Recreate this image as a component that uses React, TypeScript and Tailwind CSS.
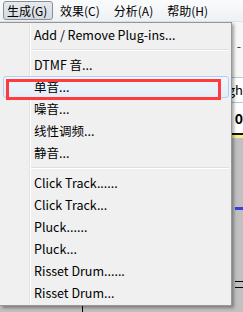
import React from 'react';

type Entry = { label: string } | { sep: true };

const entries: Entry[] = [
  { label: 'Add / Remove Plug-ins...' },
  { sep: true },
  { label: 'DTMF 音...' },
  { label: '单音...' },
  { label: '噪音...' },
  { label: '线性调频...' },
  { label: '静音...' },
  { sep: true },
  { label: 'Click Track......' },
  { label: 'Click Track...' },
  { label: 'Pluck......' },
  { label: 'Pluck...' },
  { label: 'Risset Drum......' },
  { label: 'Risset Drum...' },
];

const menus = ['生成(G)', '效果(C)', '分析(A)', '帮助(H)'];

const MenuRow: React.FC<{ label: string; active?: boolean }> = ({ label, active }) => (
  <div className="relative h-[22px] flex items-center pl-[34px]">
    {active && (
      <div className="absolute left-[3px] right-[2px] top-0 bottom-0 rounded-[3px] border border-[#aecff7] bg-gradient-to-b from-[#f2f6fc] to-[#e3ecf8]" />
    )}
    <span className="relative leading-none">{label}</span>
  </div>
);

export default function App() {
  return (
    <div
      className="relative w-[243px] h-[312px] overflow-hidden bg-[#c0c0c0] text-[12.5px] text-black"
      style={{ fontFamily: '"Noto Sans CJK SC", "Noto Sans", sans-serif' }}
    >
      {/* menu bar */}
      <div className="h-[22px] flex items-center pl-[3px] bg-gradient-to-b from-[#fafbfc] to-[#eef1f5] border-b border-[#dfe3e8] text-[12px]">
        {menus.map((m, i) => (
          <div
            key={m}
            className={
              i === 0
                ? 'w-[50px] h-[19px] pl-[3px] flex items-center rounded-[3px] border border-[#8a8f96] bg-gradient-to-b from-[#e6eaee] to-[#d4dae0]'
                : 'h-[19px] px-[7px] flex items-center'
            }
          >
            <span className="leading-none">{m}</span>
          </div>
        ))}
      </div>

      {/* app content peeking out behind the menu */}
      <div className="flex flex-col h-[290px]">
        <div className="h-[55px] bg-[#f7f7f7] flex justify-end items-start pt-[15px] pr-[2px] text-[#333]">-</div>
        <div className="h-[26px] bg-white border-y border-[#b8c8d8] flex justify-end items-center text-[13px]">gh</div>
        <div className="h-[30px] bg-white flex justify-end items-center text-[14px] font-bold">0</div>
        <div className="h-[2px] bg-[#111]" />
        <div className="h-[3px] bg-[#f3f08a]" />
        <div className="flex-1 flex">
          <div className="w-[235px] bg-[#c0c0c0]" />
          <div className="flex-1 bg-[#c0c0c0] flex flex-col">
            <div className="h-[69px]" />
            <div className="h-[3px] bg-[#3344dd]" />
            <div className="h-[71px]" />
            <div className="h-[1px] bg-black" />
            <div className="h-[5px]" />
            <div className="h-[1px] bg-black" />
          </div>
        </div>
      </div>
      <div className="absolute left-[82px] top-[300px] w-[1px] h-[12px] bg-black" />

      {/* dropdown menu */}
      <div className="absolute left-0 top-[22px] w-[232px] border border-l-0 border-[#979797] bg-[#f0f0f0] py-[1px] shadow-[2px_2px_3px_rgba(0,0,0,0.35)]">
        <div className="absolute left-[29px] top-[1px] bottom-[1px] w-[2px] border-l border-[#e2e3e3] bg-white" />
        {entries.map((e, i) =>
          'sep' in e ? (
            <div key={i} className="h-[8px] flex items-center pl-[31px] pr-[2px]">
              <div className="relative w-full h-[2px] border-t border-[#e0e0e0] bg-white" />
            </div>
          ) : (
            <MenuRow key={i} label={e.label} active={e.label === '单音...'} />
          )
        )}
      </div>

      {/* red annotation box */}
      <div className="absolute left-[6px] top-[79px] w-[215px] h-[21px] border-[3px] border-[#ff3b3b]" />
    </div>
  );
}
